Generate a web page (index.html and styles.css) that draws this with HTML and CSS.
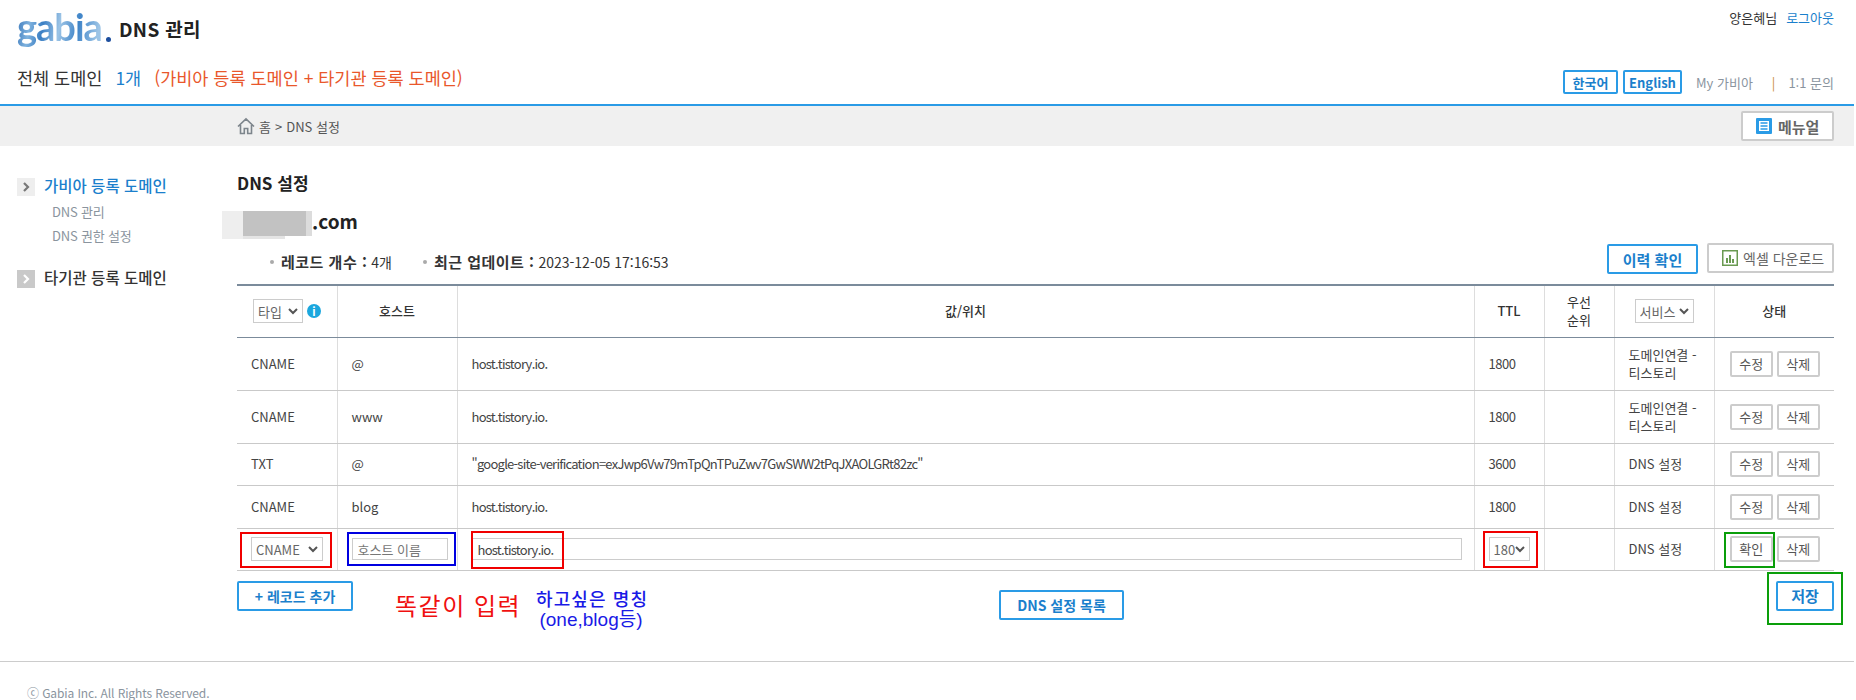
FILE: index.html
```html
<!DOCTYPE html>
<html lang="ko">
<head>
    <meta charset="UTF-8">
    <meta name="viewport" content="width=device-width, initial-scale=1.0">
    <title>DNS 관리</title>
    <link rel="stylesheet" href="styles.css">
</head>
<body>
    <div class="page">
        <header class="top">
            <div class="top-row">
                <div class="brand">
                    <span class="logo"><span class="logo-text">gabia</span><i class="logo-dot"></i></span>
                    <span class="brand-title">DNS 관리</span>
                </div>
                <div class="user"><span>양은혜님</span><a class="blue">로그아웃</a></div>
            </div>
            <div class="sub-row">
                <div class="summary">
                    <span>전체 도메인</span>
                    <span class="blue">1개</span>
                    <span class="orange">(가비아 등록 도메인 + 타기관 등록 도메인)</span>
                </div>
                <div class="top-links">
                    <a class="btn-blue btn-ko">한국어</a>
                    <a class="btn-blue btn-en">English</a>
                    <a class="top-link my">My 가비아</a>
                    <span class="top-sep">|</span>
                    <a class="top-link">1:1 문의</a>
                </div>
            </div>
        </header>

        <div class="crumb-bar">
            <div class="crumbs">
                <svg class="home" width="18" height="18" viewBox="0 0 18 18" fill="none" stroke="#7d858c" stroke-width="1.6">
                    <path d="M1 9.5 9 1.8l8 7.7M3.5 8v8.5h3.8v-5h3.4v5h3.8V8"/>
                </svg>
                <span>홈</span><span>&gt;</span><span>DNS 설정</span>
            </div>
            <a class="btn-grey btn-manual">
                <svg width="16" height="16" viewBox="0 0 16 16">
                    <rect width="16" height="16" rx="1" fill="#2a9be6"/>
                    <path d="M3 3h10v10H3z" fill="#fff"/>
                    <path d="M4.5 5h7M4.5 8h7M4.5 11h7" stroke="#2a9be6" stroke-width="1.6"/>
                </svg>
                메뉴얼
            </a>
        </div>

        <div class="main">
            <nav class="side">
                <div class="side-head active">
                    <span class="chev">
                        <svg width="18" height="18" viewBox="0 0 18 18" fill="none" stroke="#777" stroke-width="2.2"><path d="M7 5l4 4-4 4"/></svg>
                    </span>
                    <span class="side-label">가비아 등록 도메인</span>
                </div>
                <a class="side-link">DNS 관리</a>
                <a class="side-link">DNS 권한 설정</a>
                <div class="side-head other">
                    <span class="chev chev-dark">
                        <svg width="18" height="18" viewBox="0 0 18 18" fill="none" stroke="#fff" stroke-width="2.2"><path d="M7 5l4 4-4 4"/></svg>
                    </span>
                    <span class="side-label">타기관 등록 도메인</span>
                </div>
            </nav>

            <section class="content">
                <h2 class="title">DNS 설정</h2>
                <div class="domain">
                    <span class="blur">
                        <i class="b1"></i><i class="b2"></i><i class="b3"></i><i class="b4"></i>
                    </span>.com
                </div>
                <div class="stat-row">
                    <div class="stats">
                        <span class="stat"><b>레코드 개수 :</b> 4개</span>
                        <span class="stat"><b>최근 업데이트 :</b> 2023-12-05 17:16:53</span>
                    </div>
                    <div class="stat-btns">
                        <a class="btn-blue btn-history">이력 확인</a>
                        <a class="btn-grey btn-excel">
                            <svg width="16" height="16" viewBox="0 0 16 16">
                                <rect x="0.75" y="0.75" width="14.5" height="14.5" fill="#fff" stroke="#6a9a52" stroke-width="1.5"/>
                                <path d="M4 8h2v5H4zM7 5h2v8H7zM10 9h2v4h-2z" fill="#6a9a52"/>
                            </svg>
                            엑셀 다운로드
                        </a>
                    </div>
                </div>

                <table class="records">
                    <colgroup>
                        <col class="c-type"><col class="c-host"><col class="c-value"><col class="c-ttl">
                        <col class="c-pri"><col class="c-svc"><col class="c-state">
                    </colgroup>
                    <thead>
                        <tr>
                            <th>
                                <span class="type-head">
                                    <select class="sel sel-type"><option>타입</option></select>
                                    <span class="info">i</span>
                                </span>
                            </th>
                            <th>호스트</th>
                            <th>값/위치</th>
                            <th>TTL</th>
                            <th class="th-pri">우선<br>순위</th>
                            <th><select class="sel sel-svc"><option>서비스</option></select></th>
                            <th>상태</th>
                        </tr>
                    </thead>
                    <tbody>
                        <tr class="r-53">
                            <td>CNAME</td><td>@</td><td class="val">host.tistory.io.</td><td class="num">1800</td><td></td>
                            <td>도메인연결 -<br>티스토리</td>
                            <td><span class="acts"><a class="btn-row">수정</a><a class="btn-row">삭제</a></span></td>
                        </tr>
                        <tr class="r-53">
                            <td>CNAME</td><td>www</td><td class="val">host.tistory.io.</td><td class="num">1800</td><td></td>
                            <td>도메인연결 -<br>티스토리</td>
                            <td><span class="acts"><a class="btn-row">수정</a><a class="btn-row">삭제</a></span></td>
                        </tr>
                        <tr class="r-42">
                            <td>TXT</td><td>@</td><td class="val">"google-site-verification=exJwp6Vw79mTpQnTPuZwv7GwSWW2tPqJXAOLGRt82zc"</td><td class="num">3600</td><td></td>
                            <td>DNS 설정</td>
                            <td><span class="acts"><a class="btn-row">수정</a><a class="btn-row">삭제</a></span></td>
                        </tr>
                        <tr class="r-43">
                            <td>CNAME</td><td>blog</td><td class="val">host.tistory.io.</td><td class="num">1800</td><td></td>
                            <td>DNS 설정</td>
                            <td><span class="acts"><a class="btn-row">수정</a><a class="btn-row">삭제</a></span></td>
                        </tr>
                        <tr class="r-42">
                            <td><select class="sel sel-cname"><option>CNAME</option></select></td>
                            <td><input class="field field-host" placeholder="호스트 이름"></td>
                            <td><input class="field field-value" value="host.tistory.io."></td>
                            <td><select class="sel sel-ttl"><option>180</option></select></td>
                            <td></td>
                            <td>DNS 설정</td>
                            <td><span class="acts"><a class="btn-row">확인</a><a class="btn-row">삭제</a></span></td>
                        </tr>
                    </tbody>
                </table>

                <div class="bottom-btns">
                    <a class="btn-blue btn-add"><span class="plus">+</span> 레코드 추가</a>
                    <a class="btn-blue btn-list">DNS 설정 목록</a>
                    <a class="btn-blue btn-save">저장</a>
                </div>
            </section>
        </div>

        <footer class="foot">ⓒ Gabia Inc. All Rights Reserved.</footer>

        <!-- annotations drawn on top of the screenshot -->
        <i class="mark mark-red m-type"></i>
        <i class="mark mark-blue m-host"></i>
        <i class="mark mark-red m-value"></i>
        <i class="mark mark-red m-ttl"></i>
        <i class="mark mark-green m-ok"></i>
        <i class="mark mark-green m-save"></i>
        <div class="note note-red">똑같이 입력</div>
        <div class="note note-blue">
            <div class="note-line1">하고싶은 명칭</div>
            <div class="note-line2">(one,blog등)</div>
        </div>
    </div>
</body>
</html>
```

FILE: styles.css
```css
* {
    box-sizing: border-box;
}

body {
    margin: 0;
    background-color: white;
    color: #333;
    font-family: "Noto Sans CJK KR", "Noto Sans", sans-serif;
    font-size: 13px;
}

.page {
    position: relative;
    width: 1854px;
    height: 700px;
    overflow: hidden;
}

.blue { color: #1b7fcc; }
.orange { color: #e9572b; }

/* header */
.top {
    height: 106px;
    border-bottom: 2px solid #2a9be6;
    padding: 0 20px 0 17px;
}

.top-row {
    display: flex;
    justify-content: space-between;
    height: 70px;
}

.brand {
    display: flex;
    align-items: flex-start;
}

.logo {
    display: flex;
    align-items: flex-end;
    width: 102px;
    height: 52px;
}

.logo-text {
    font-family: Lato, sans-serif;
    font-weight: 700;
    font-size: 38px;
    line-height: 52px;
    letter-spacing: -1px;
    background: linear-gradient(100deg, #2e6db4, #7fb2de 18%, #3b7fc4 32%, #9cc4e6 50%, #3f84c8 70%, #9cc4e6 92%);
    -webkit-background-clip: text;
    background-clip: text;
    color: transparent;
}

.logo-dot {
    display: block;
    width: 5px;
    height: 5px;
    margin: 0 0 10px 4px;
    border-radius: 50%;
    background-color: #1d4e9e;
}

.brand-title {
    margin-top: 15px;
    font-size: 19px;
    font-weight: 700;
    line-height: 27px;
    letter-spacing: 0.3px;
    color: #222;
}

.user {
    display: flex;
    gap: 9px;
    margin-top: 9px;
    line-height: 18px;
}

.sub-row {
    display: flex;
    justify-content: space-between;
    align-items: flex-start;
}

.summary {
    display: flex;
    gap: 13px;
    margin-top: -4px;
    font-size: 17.5px;
    line-height: 24px;
}

.top-links {
    display: flex;
    align-items: center;
    gap: 5px;
    height: 24px;
}

.top-link {
    color: #8a949e;
}

.my {
    margin-left: 9px;
}

.top-sep {
    margin: 0 8px 0 14px;
    color: #c98a3c;
}

.btn-blue {
    display: inline-flex;
    align-items: center;
    justify-content: center;
    background-color: white;
    border: 2px solid #2a9be6;
    border-radius: 2px;
    color: #1b7fcc;
    font-weight: 700;
}

.btn-grey {
    display: inline-flex;
    align-items: center;
    background-color: white;
    border: 2px solid #ccc;
    border-radius: 2px;
    color: #666;
}

.btn-ko {
    width: 55px;
    height: 24px;
}

.btn-en {
    width: 59px;
    height: 24px;
}

/* breadcrumb */
.crumb-bar {
    display: flex;
    justify-content: space-between;
    align-items: center;
    height: 40px;
    padding: 0 20px 0 237px;
    background-color: #f0f0f0;
}

.crumbs {
    display: flex;
    align-items: center;
    gap: 4px;
    color: #555;
}

.btn-manual {
    width: 93px;
    height: 30px;
    gap: 6px;
    padding-left: 13px;
    font-size: 15px;
    font-weight: 700;
}

/* sidebar + content */
.main {
    display: flex;
    height: 515px;
}

.side {
    flex: none;
    width: 237px;
    padding: 32px 0 0 17px;
}

.side-head {
    display: flex;
    align-items: center;
    gap: 9px;
    height: 18px;
    font-size: 15.5px;
    font-weight: 500;
}

.side-label {
    padding-bottom: 5px;
}

.side-head.active {
    margin-bottom: 4px;
    color: #1b7fcc;
}

.side-head.other {
    margin-top: 22px;
}

.chev {
    display: block;
    width: 18px;
    height: 18px;
    background-color: #eee;
}

.chev svg {
    display: block;
}

.chev-dark {
    background-color: #c9c9c9;
}

.side-link {
    display: block;
    height: 24px;
    margin-left: 35px;
    letter-spacing: -0.2px;
    line-height: 24px;
    color: #8a949e;
}

.content {
    flex: 1;
    padding-right: 20px;
}

.title {
    margin: 26px 0 0;
    font-size: 17px;
    font-weight: 700;
    line-height: 22px;
    color: #222;
}

.domain {
    display: flex;
    align-items: center;
    height: 28px;
    margin-top: 14px;
    padding-bottom: 4px;
    font-size: 19px;
    font-weight: 700;
    color: #222;
}

.blur {
    position: relative;
    width: 75px;
    height: 28px;
}

.blur i {
    position: absolute;
    display: block;
}

.blur .b1 { left: -15px; top: 5px; width: 21px; height: 28px; background-color: #eeeeee; }
.blur .b2 { left: 6px; top: 5px; width: 63px; height: 25px; background-color: #c2c2c2; }
.blur .b3 { left: 6px; top: 30px; width: 42px; height: 3px; background-color: #e4e4e4; }
.blur .b4 { left: 69px; top: 5px; width: 6px; height: 25px; background-color: #dcdcdc; }

.stat-row {
    display: flex;
    justify-content: space-between;
    align-items: flex-start;
    height: 48px;
}

.stats {
    display: flex;
    gap: 31px;
    padding: 17px 0 0 33px;
    font-size: 14px;
    line-height: 18px;
}

.stat {
    position: relative;
    padding-left: 11px;
}

.stat::before {
    content: "";
    position: absolute;
    left: 0;
    top: 7px;
    width: 4px;
    height: 4px;
    border-radius: 50%;
    background-color: #aaa;
}

.stat b {
    font-size: 15px;
    font-weight: 700;
    letter-spacing: 0.5px;
}

.stat-btns {
    display: flex;
    gap: 9px;
    margin-top: 8px;
}

.btn-history {
    width: 91px;
    height: 30px;
    font-size: 15px;
}

.btn-excel {
    width: 127px;
    height: 30px;
    margin-top: -1px;
    gap: 5px;
    padding-left: 13px;
    font-size: 14px;
}

/* table */
.records {
    width: 1597px;
    table-layout: fixed;
    border-collapse: collapse;
    border-top: 2px solid #7b8b9b;
}

.c-type { width: 100px; }
.c-host { width: 120px; }
.c-value { width: 1017px; }
.c-ttl { width: 70px; }
.c-pri { width: 70px; }
.c-svc { width: 100px; }
.c-state { width: 120px; }

.records th {
    height: 52px;
    padding: 0;
    border-bottom: 1px solid #7b8b9b;
    border-left: 1px solid #ddd;
    font-weight: 500;
    line-height: 18px;
    text-align: center;
}

.records td {
    padding: 0 14px;
    border-bottom: 1px solid #c9c9c9;
    border-left: 1px solid #ddd;
    line-height: 18px;
    color: #444;
}

.records th:first-child,
.records td:first-child {
    border-left: none;
}

.records .th-pri {
    font-weight: 400;
}

.records .val {
    letter-spacing: -0.75px;
}

.records .num {
    letter-spacing: -0.5px;
}

.r-53 { height: 53px; }
.r-42 { height: 42px; }
.r-43 { height: 43px; }

.type-head {
    display: flex;
    align-items: center;
    gap: 4px;
    padding-left: 16px;
}

.info {
    width: 14px;
    height: 14px;
    border-radius: 50%;
    background-color: #1ba7de;
    color: white;
    font-size: 11px;
    font-weight: 700;
    line-height: 14px;
    text-align: center;
}

.sel {
    height: 24px;
    padding: 0 0 0 4px;
    border: 1px solid #ccc;
    border-radius: 0;
    appearance: none;
    background: white url("data:image/svg+xml,%3Csvg xmlns='http://www.w3.org/2000/svg' width='10' height='7'%3E%3Cpath d='M1 1l4 4 4-4' fill='none' stroke='%23555' stroke-width='2'/%3E%3C/svg%3E") no-repeat right 4px center;
    color: #666;
    font-family: inherit;
    font-size: 13px;
}

.sel-type { width: 50px; }
.sel-svc { width: 59px; }
.sel-cname { width: 72px; }
.sel-ttl { width: 41px; }

.field {
    display: block;
    height: 22px;
    padding: 0 5px;
    border: 1px solid #ccc;
    border-radius: 0;
    color: #444;
    font-family: inherit;
    font-size: 13px;
}

.field::placeholder {
    color: #777;
}

.field-host { width: 96px; }
.field-value { width: 990px; letter-spacing: -0.75px; }

.acts {
    display: flex;
    justify-content: center;
    gap: 4px;
    margin: 0 -14px;
    padding-left: 1px;
}

.btn-row {
    display: inline-flex;
    align-items: center;
    justify-content: center;
    width: 43px;
    height: 26px;
    background-color: white;
    border: 2px solid #ccc;
    border-radius: 2px;
    color: #555;
}

.bottom-btns {
    display: flex;
    justify-content: space-between;
    align-items: flex-start;
    margin-top: 10px;
}

.btn-add {
    width: 116px;
    height: 30px;
    font-size: 14px;
}

.plus {
    margin-right: 4px;
}

.btn-list {
    width: 125px;
    height: 30px;
    margin: 9px 6px 0 0;
    font-size: 14px;
}

.btn-save {
    width: 58px;
    height: 30px;
    font-size: 15px;
}

.foot {
    height: 39px;
    padding: 21px 0 0 27px;
    border-top: 1px solid #ccc;
    font-size: 12px;
    letter-spacing: -0.1px;
    line-height: 20px;
    color: #8a949e;
}

/* hand-drawn boxes and notes over the page */
.mark {
    position: absolute;
    display: block;
    border: 2px solid;
}

.mark-red { border-color: #f00000; }
.mark-blue { border-color: #0000e0; }
.mark-green { border-color: #0a9e0a; }

.m-type { left: 240px; top: 532px; width: 92px; height: 36px; }
.m-host { left: 347px; top: 532px; width: 109px; height: 34px; }
.m-value { left: 471px; top: 531px; width: 93px; height: 38px; }
.m-ttl { left: 1483px; top: 531px; width: 55px; height: 37px; }
.m-ok { left: 1724px; top: 532px; width: 51px; height: 36px; }
.m-save { left: 1767px; top: 572px; width: 76px; height: 53px; }

.note {
    position: absolute;
    white-space: nowrap;
}

.note-red {
    left: 395px;
    top: 589px;
    font-size: 24px;
    letter-spacing: 1.5px;
    line-height: 32px;
    color: #f01010;
}

.note-blue {
    left: 536px;
    top: 588px;
    width: 110px;
    font-size: 18px;
    line-height: 21px;
    text-align: center;
    color: #1a1ae6;
}

.note-line1 {
    font-weight: 500;
    letter-spacing: 1.1px;
}

.note-line2 {
    font-family: "Liberation Sans", "Noto Sans CJK KR", sans-serif;
    font-size: 19px;
}
```
